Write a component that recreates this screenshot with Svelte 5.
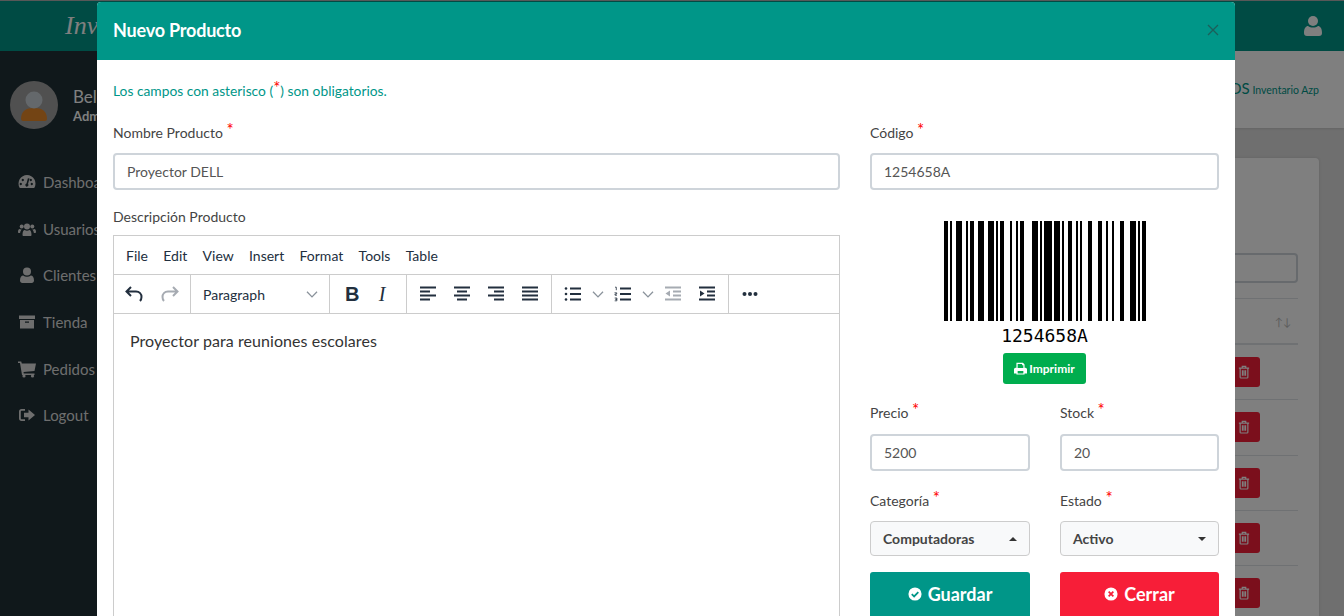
<script>
  const patterns = {
    105: '211232', 12: '112232', 54: '311123', 65: '121124', 101: '311141',
    24: '311222', 33: '111323', 9: '221213', stop: '2331112'
  };
  const codes = [105, 12, 54, 65, 101, 24, 33, 9, 'stop'];
  const bars = [];
  let cursor = 0;
  for (const code of codes) {
    [...patterns[code]].forEach((n, i) => {
      const w = Number(n) * 2;
      if (i % 2 === 0) bars.push({ x: cursor, w });
      cursor += w;
    });
  }

  const nav = [
    { label: 'Dashboard', icon: 'dash' },
    { label: 'Usuarios', icon: 'users' },
    { label: 'Clientes', icon: 'user' },
    { label: 'Tienda', icon: 'box' },
    { label: 'Pedidos', icon: 'cart' },
    { label: 'Logout', icon: 'out' }
  ];
  const rows = [1, 2, 3, 4, 5];
</script>

<div class="page">
  <header class="topbar">
    <span class="brand">Inventario</span>
    <svg class="top-user" viewBox="0 0 18 20"><circle cx="9" cy="5" r="5"/><path d="M0 17c0-5 2-7 4-7 1.500 1 3 1.500 5 1.500s3.500-.5 5-1.500c2 0 4 2 4 7 0 2-1 3-3 3H3c-2 0-3-1-3-3z"/></svg>
  </header>
  <div class="shell">
    <aside class="sidebar">
      <div class="profile">
        <div class="avatar">
          <svg viewBox="0 0 48 48"><path d="M11 38c0-8 5-11 13-11s13 3 13 11c0 1-1 2-2 2H13c-1 0-2-1-2-2z" fill="#ff8000" opacity=".75"/><circle cx="24" cy="19" r="8.500" fill="#c9d0d6"/></svg>
        </div>
        <div class="who"><b>Belen</b><small>Admin</small></div>
      </div>
      <nav class="menu">
        {#each nav as item}
          <div class="menu-item">
            <svg class="menu-icon" viewBox="0 0 18 18">
              {#if item.icon === 'dash'}
                <path fill-rule="evenodd" d="M9 2a8.500 8.500 0 0 0-7.400 12.700c.2.300.5.300.8.300h13.200c.3 0 .6 0 .8-.3A8.500 8.500 0 0 0 9 2zM4 11a1.200 1.200 0 1 1 0-.1zm2-4a1.200 1.200 0 1 1 0-.1zm5.500-1.500L10 11a1.500 1.500 0 1 1-1.500-.4l1.400-5.400zM14 7a1.200 1.200 0 1 1 0-.1zm1 4a1.200 1.200 0 1 1 0-.1z"/>
              {:else if item.icon === 'users'}
                <circle cx="9" cy="6.500" r="3"/><circle cx="3.700" cy="6.500" r="2"/><circle cx="14.300" cy="6.500" r="2"/><path d="M4.500 15c0-3.500 1-5 2.200-5 .6.400 1.400.7 2.300.7s1.700-.3 2.300-.7c1.200 0 2.200 1.500 2.200 5 0 .6-.5 1-1.200 1H5.700c-.7 0-1.200-.4-1.200-1z"/><path d="M0 12c0-2 .7-3 1.700-3 .6.400 1.200.6 2 .6-.8.900-1.500 2-1.600 3.400H1c-.6 0-1-.4-1-1zM18 12c0-2-.7-3-1.700-3-.6.400-1.200.6-2 .6.800.9 1.500 2 1.600 3.400h1c.6 0 1.100-.4 1.100-1z"/>
              {:else if item.icon === 'user'}
                <circle cx="9" cy="5.500" r="4"/><path d="M2 14.500c0-3.500 1.500-5 3.200-5 1 .8 2.300 1.200 3.800 1.200s2.800-.4 3.800-1.200c1.700 0 3.200 1.500 3.200 5 0 1.500-1 2.500-2.300 2.500H4.300C3 17 2 16 2 14.500z"/>
              {:else if item.icon === 'box'}
                <path fill-rule="evenodd" d="M1 2.500h16v3.500H1zM2 7h14v8.500H2zm5 1.500v1.300h4V8.500z"/>
              {:else if item.icon === 'cart'}
                <path d="M0 1.500h3.200l.6 2H18l-1.500 7.500-11 1 .3 1.500h10.700v1.500H4L2 3H0z"/><circle cx="6" cy="16" r="1.600"/><circle cx="14.500" cy="16" r="1.600"/>
              {:else}
                <path d="M7 3H3.500C2 3 1 4 1 5.500v7C1 14 2 15 3.500 15H7v-1.800H3.800c-.6 0-1-.4-1-1V5.800c0-.6.400-1 1-1H7z"/><path d="M10.500 3.500 17 9l-6.500 5.500v-3.200H6V6.700h4.500z"/>
              {/if}
            </svg>
            <span>{item.label}</span>
          </div>
        {/each}
      </nav>
    </aside>
    <main class="content">
      <div class="content-head"><span class="crumb"><span class="big">POS</span> <span>Inventario Azp</span></span></div>
      <div class="card">
        <div class="search"></div>
        <div class="thead"><span class="sort">↑↓</span></div>
        {#each rows as row}
          <div class="row">
            <span class="trash" data-row={row}>
              <svg viewBox="0 0 14 16"><path fill="none" stroke-width="1.400" d="M1 3.500h12M2.500 3.500v10.500c0 .6.400 1 1 1h7c.6 0 1-.4 1-1V3.500M5 3.300V1.500h4v1.800M5.200 6v6.500M7 6v6.500M8.800 6v6.500"/></svg>
            </span>
          </div>
        {/each}
      </div>
    </main>
  </div>
  <div class="backdrop"></div>

  <section class="modal">
    <div class="modal-head">
      <h2>Nuevo Producto</h2>
      <svg class="close" viewBox="0 0 12 12"><path d="M1 1l10 10M11 1L1 11" stroke="#1c5f5a" stroke-width="1.300" fill="none"/></svg>
    </div>
    <div class="modal-body">
      <p class="hint">Los campos con asterisco (<span class="star">*</span>) son obligatorios.</p>
      <div class="columns">
        <div class="col-left">
          <label class="field-label">Nombre Producto <span class="star">*</span></label>
          <div class="input">Proyector DELL</div>
          <label class="field-label desc-label">Descripción Producto</label>
          <div class="editor">
            <div class="menubar">
              <span>File</span><span>Edit</span><span>View</span><span>Insert</span><span>Format</span><span>Tools</span><span>Table</span>
            </div>
            <div class="toolbar">
              <div class="group g-history">
                <svg class="tool" viewBox="0 0 24 24"><path d="M9 5 4.500 9.500 9 14M5 9.500h9c3.500 0 5.500 2.500 5.500 5.500 0 1.800-.5 3-1.500 4" fill="none" stroke="#222f3e" stroke-width="2"/></svg>
                <svg class="tool" viewBox="0 0 24 24"><path d="M15 5l4.500 4.500L15 14M19 9.500h-9C6.500 9.500 4.500 12 4.500 15c0 1.800.5 3 1.500 4" fill="none" stroke="#a6abb2" stroke-width="2"/></svg>
              </div>
              <div class="group g-format">
                <span>Paragraph</span>
                <svg class="chev" viewBox="0 0 10 6"><path d="M.7.700 5 5l4.300-4.300" fill="none" stroke="#8a929b" stroke-width="1.100"/></svg>
              </div>
              <div class="group g-style">
                <span class="tb-b">B</span>
                <span class="tb-i">I</span>
              </div>
              <div class="group g-align">
                <svg class="tool" viewBox="0 0 24 24"><path d="M4 5.500h16M4 9.500h10M4 13.500h16M4 17.500h10" stroke="#222f3e" stroke-width="2"/></svg>
                <svg class="tool" viewBox="0 0 24 24"><path d="M4 5.500h16M7 9.500h10M4 13.500h16M7 17.500h10" stroke="#222f3e" stroke-width="2"/></svg>
                <svg class="tool" viewBox="0 0 24 24"><path d="M4 5.500h16M10 9.500h10M4 13.500h16M10 17.500h10" stroke="#222f3e" stroke-width="2"/></svg>
                <svg class="tool" viewBox="0 0 24 24"><path d="M4 5.500h16M4 9.500h16M4 13.500h16M4 17.500h16" stroke="#222f3e" stroke-width="2"/></svg>
              </div>
              <div class="group g-lists">
                <svg class="tool-s" viewBox="0 0 18 16"><path d="M6 2.500h11M6 8h11M6 13.500h11" stroke="#222f3e" stroke-width="1.800"/><circle cx="2" cy="2.500" r="1.300" fill="#222f3e"/><circle cx="2" cy="8" r="1.300" fill="#222f3e"/><circle cx="2" cy="13.500" r="1.300" fill="#222f3e"/></svg>
                <svg class="chev lc" viewBox="0 0 10 6"><path d="M.7.700 5 5l4.300-4.300" fill="none" stroke="#8a929b" stroke-width="1.100"/></svg>
                <svg class="tool-s" viewBox="0 0 18 16"><path d="M6 2.500h11M6 8h11M6 13.500h11" stroke="#222f3e" stroke-width="1.800"/><path d="M1 1.200h1.300v3M.5 6.800h2.200v1.200H1v1.200h2M.7 12h2.200v1.300H1.500h1.400v1.500H.7" fill="none" stroke="#222f3e" stroke-width=".8"/></svg>
                <svg class="chev lc" viewBox="0 0 10 6"><path d="M.7.700 5 5l4.300-4.300" fill="none" stroke="#8a929b" stroke-width="1.100"/></svg>
                <svg class="tool outdent" viewBox="0 0 24 24"><path d="M4 5.500h16M12 9.500h8M12 13.500h8M4 17.500h16" stroke="#a6abb2" stroke-width="2"/><path d="M9 8.500v6l-4.500-3z" fill="#a6abb2"/></svg>
                <svg class="tool" viewBox="0 0 24 24"><path d="M4 5.500h16M12 9.500h8M12 13.500h8M4 17.500h16" stroke="#222f3e" stroke-width="2"/><path d="M5 8.500v6l4.500-3z" fill="#222f3e"/></svg>
              </div>
              <div class="group g-more">
                <svg class="tool" viewBox="0 0 24 24"><circle cx="6.500" cy="12" r="2" fill="#222f3e"/><circle cx="12" cy="12" r="2" fill="#222f3e"/><circle cx="17.500" cy="12" r="2" fill="#222f3e"/></svg>
              </div>
            </div>
            <div class="edit-area">Proyector para reuniones escolares</div>
          </div>
        </div>

        <div class="col-right">
          <label class="field-label">Código <span class="star">*</span></label>
          <div class="input">1254658A</div>
          <div class="barcode">
            <svg width={cursor} height="100" viewBox="0 0 {cursor} 100" shape-rendering="crispEdges">
              {#each bars as bar}
                <rect x={bar.x} y="0" width={bar.w} height="100" fill="#000" />
              {/each}
            </svg>
            <div class="code-text">1254658A</div>
            <div class="print">
              <svg viewBox="0 0 16 16"><path fill-rule="evenodd" d="M3 1h8l2 2v4h1c1 0 2 1 2 2v5h-3v1.500H3V14H0V9c0-1 1-2 2-2h1V1zm1.500 1.500V7.500h7V4H10V2.500zM4.500 11v3h7v-3z"/></svg>
              Imprimir
            </div>
          </div>
          <div class="pair">
            <div>
              <label class="field-label">Precio <span class="star">*</span></label>
              <div class="input">5200</div>
            </div>
            <div>
              <label class="field-label">Stock <span class="star">*</span></label>
              <div class="input">20</div>
            </div>
          </div>
          <div class="pair pair-select">
            <div>
              <label class="field-label">Categoría <span class="star">*</span></label>
              <div class="select">Computadoras <i class="caret up"></i></div>
            </div>
            <div>
              <label class="field-label">Estado <span class="star">*</span></label>
              <div class="select">Activo <i class="caret"></i></div>
            </div>
          </div>
          <div class="pair pair-actions">
            <div class="action save">
              <svg viewBox="0 0 16 16"><circle cx="8" cy="8" r="7.500" fill="#fff"/><path d="M4.300 8.200 7 10.800l4.800-5" fill="none" stroke="#009688" stroke-width="2"/></svg>
              Guardar
            </div>
            <div class="action cancel">
              <svg viewBox="0 0 16 16"><circle cx="8" cy="8" r="7.500" fill="#fff"/><path d="M5.300 5.300l5.400 5.400M10.700 5.300l-5.400 5.400" fill="none" stroke="#f71e38" stroke-width="2"/></svg>
              Cerrar
            </div>
          </div>
        </div>
      </div>
    </div>
  </section>
</div>

<style>
  :global(body) {
    margin: 0;
    font-family: Lato, "Open Sans", sans-serif;
  }
  .page {
    position: relative;
    width: 1344px;
    height: 616px;
    overflow: hidden;
    background: #dedede;
    font-size: 14px;
    color: #444;
  }
  .topbar {
    height: 50px;
    border-top: 1px solid #b0b0b0;
    background: #009688;
    display: flex;
    align-items: center;
    justify-content: space-between;
    padding: 0 22px 0 65px;
  }
  .brand {
    font-family: "Liberation Serif", serif;
    font-style: italic;
    font-size: 26px;
    color: #fff;
  }
  .top-user {
    width: 18px;
    height: 20px;
    fill: #fff;
  }
  .shell {
    display: flex;
    height: 565px;
  }
  .sidebar {
    width: 230px;
    flex-shrink: 0;
    background: #203036;
    color: #fff;
  }
  .profile {
    display: flex;
    align-items: center;
    gap: 15px;
    padding: 30px 10px 0;
  }
  .avatar {
    width: 48px;
    height: 48px;
    border-radius: 50%;
    background: #a0a0a0;
    overflow: hidden;
  }
  .avatar svg {
    display: block;
    width: 48px;
    height: 48px;
  }
  .who b {
    display: block;
    font-weight: 400;
    font-size: 17px;
  }
  .who small {
    font-size: 13px;
    font-weight: 700;
  }
  .menu {
    margin-top: 30px;
    display: flex;
    flex-direction: column;
  }
  .menu-item {
    height: 46.600px;
    display: flex;
    align-items: center;
    gap: 7px;
    padding-left: 18px;
    font-size: 15px;
    color: #ddd;
  }
  .menu-icon {
    width: 18px;
    height: 18px;
    fill: #ddd;
  }
  .content {
    flex: 1;
    display: flex;
    flex-direction: column;
    min-height: 0;
  }
  .content-head {
    height: 77px;
    flex-shrink: 0;
    box-sizing: border-box;
    padding: 0 25px 4px 0;
    background: #fff;
    display: flex;
    align-items: center;
    justify-content: flex-end;
    box-shadow: 0 1px 2px rgba(0, 0, 0, 0.1);
  }
  .crumb {
    color: #009688;
    font-size: 10.500px;
  }
  .crumb .big {
    font-size: 15px;
  }
  .card {
    margin: 30px 25px 0 auto;
    width: 500px;
    flex: 1;
    min-height: 0;
    overflow: hidden;
    background: #fff;
    border-radius: 4px 4px 0 0;
    padding: 95px 21px 0 0;
    box-sizing: border-box;
    box-shadow: 0 0 3px rgba(0, 0, 0, 0.12);
  }
  .search {
    height: 30px;
    border: 2px solid #ced4da;
    border-radius: 4px;
    box-sizing: border-box;
  }
  .thead {
    margin-top: 15px;
    height: 47px;
    box-sizing: border-box;
    border-top: 1px solid #dee2e6;
    border-bottom: 2px solid #dee2e6;
    display: flex;
    align-items: center;
    justify-content: flex-end;
    padding-right: 7px;
  }
  .sort {
    color: #bbb;
    font-size: 11px;
  }
  .row {
    height: 55.300px;
    box-sizing: border-box;
    border-bottom: 1px solid #dee2e6;
    display: flex;
    align-items: center;
    justify-content: flex-end;
    padding-right: 38px;
  }
  .trash {
    width: 50px;
    height: 30px;
    border-radius: 3px;
    background: #f71e38;
    display: flex;
    align-items: center;
    justify-content: flex-end;
    padding-right: 10px;
    box-sizing: border-box;
  }
  .trash svg {
    width: 12px;
    height: 14px;
  }
  .trash svg path {
    stroke: #fff;
  }
  .backdrop {
    position: absolute;
    inset: 0;
    background: rgba(0, 0, 0, 0.5);
  }
  .modal {
    position: absolute;
    left: 97px;
    top: 2px;
    width: 1138px;
    background: #fff;
    border-radius: 4px 4px 0 0;
    height: 700px;
  }
  .modal-head {
    height: 58px;
    box-sizing: border-box;
    padding: 0 16px 2px;
    background: #009688;
    border-radius: 4px 4px 0 0;
    display: flex;
    align-items: center;
    justify-content: space-between;
  }
  .modal-head h2 {
    margin: 0;
    font-size: 18px;
    font-weight: 700;
    color: #fff;
    letter-spacing: -0.2px;
  }
  .close {
    width: 12px;
    height: 12px;
  }
  .modal-body {
    padding: 21px 16px 0;
  }
  .hint {
    margin: 0 0 22px;
    font-size: 13.800px;
    line-height: 20px;
    color: #009688;
  }
  .star {
    color: #f00;
    font-size: 17px;
    line-height: 10px;
    position: relative;
    top: -2px;
  }
  .columns {
    display: flex;
    gap: 30px;
  }
  .col-left {
    width: 727px;
  }
  .col-right {
    width: 349px;
  }
  .field-label {
    display: block;
    font-size: 14px;
    line-height: 20px;
    color: #444;
    margin-bottom: 10px;
  }
  .desc-label {
    margin-top: 17px;
    margin-bottom: 8px;
  }
  .input {
    height: 37px;
    box-sizing: border-box;
    border: 2px solid #ced4da;
    border-radius: 4px;
    padding: 0 12px;
    display: flex;
    align-items: center;
    font-size: 14px;
    color: #555;
  }
  .editor {
    border: 1px solid #ccc;
    height: 500px;
    box-sizing: border-box;
  }
  .menubar {
    height: 38px;
    display: flex;
    align-items: center;
    gap: 15.300px;
    padding-left: 12px;
    font-size: 14px;
    color: #222f3e;
  }
  .toolbar {
    height: 40px;
    box-sizing: border-box;
    border-top: 1px solid #ccc;
    border-bottom: 1px solid #ccc;
    display: flex;
    align-items: center;
  }
  .group {
    height: 100%;
    display: flex;
    align-items: center;
    box-sizing: border-box;
    border-right: 1px solid #ccc;
  }
  .group:last-child {
    border-right: none;
  }
  .tool {
    width: 24px;
    height: 24px;
    flex-shrink: 0;
  }
  .tool-s {
    width: 18px;
    height: 16px;
    flex-shrink: 0;
  }
  .g-history {
    width: 77px;
    gap: 12px;
    padding-left: 8px;
  }
  .g-format {
    width: 139px;
    justify-content: space-between;
    padding: 0 11px 0 12px;
    font-size: 14px;
    color: #222f3e;
  }
  .chev {
    width: 12px;
    height: 7px;
    flex-shrink: 0;
  }
  .g-style {
    width: 77px;
    gap: 16px;
    padding-left: 15px;
  }
  .tb-b {
    font: 700 20px "Liberation Sans", sans-serif;
    color: #222f3e;
    width: 14px;
  }
  .tb-i {
    font: italic 400 20px "Liberation Serif", serif;
    color: #222f3e;
    width: 14px;
    text-align: center;
  }
  .g-align {
    width: 145px;
    gap: 10px;
    padding-left: 9px;
  }
  .g-lists {
    width: 177px;
    padding-left: 12px;
  }
  .lc {
    margin: 0 10px;
  }
  .outdent {
    margin: 0 10px 0 -3px;
  }
  .g-more {
    padding-left: 9px;
  }
  .edit-area {
    padding: 17px 16px;
    font-size: 16px;
    line-height: 20px;
    letter-spacing: 0.07px;
    color: #333;
  }
  .barcode {
    display: flex;
    flex-direction: column;
    align-items: center;
    margin-top: 31px;
  }
  .barcode svg {
    display: block;
  }
  .code-text {
    font: 18px "DejaVu Sans Mono", "Liberation Mono", monospace;
    line-height: 20px;
    color: #000;
    margin-top: 5px;
    margin-bottom: 1px;
  }
  .print {
    margin-top: 6px;
    width: 83px;
    height: 31px;
    border-radius: 3px;
    background: #00ad4e;
    color: #fff;
    font-size: 12px;
    font-weight: 700;
    display: flex;
    align-items: center;
    justify-content: center;
    gap: 2px;
  }
  .print svg {
    width: 13px;
    height: 13px;
    fill: #fff;
  }
  .pair {
    display: grid;
    grid-template-columns: 160px 159px;
    gap: 30px;
    margin-top: 19px;
  }
  .pair .field-label {
    margin-bottom: 11px;
  }
  .pair-select {
    margin-top: 20px;
  }
  .select {
    height: 35px;
    box-sizing: border-box;
    border: 1px solid #ccc;
    border-radius: 4px;
    background: #f8f9fa;
    padding: 0 12px;
    display: flex;
    align-items: center;
    justify-content: space-between;
    font-size: 14px;
    font-weight: 700;
    color: #444;
    margin-top: -1px;
  }
  .caret {
    width: 0;
    height: 0;
    border-left: 4px solid transparent;
    border-right: 4px solid transparent;
    border-top: 4px solid #333;
  }
  .caret.up {
    border-top: none;
    border-bottom: 4px solid #333;
  }
  .pair-actions {
    margin-top: 16px;
  }
  .action {
    height: 46px;
    box-sizing: border-box;
    padding-bottom: 2px;
    border-radius: 3px;
    color: #fff;
    font-size: 18px;
    font-weight: 700;
    display: flex;
    align-items: center;
    justify-content: center;
    gap: 6px;
  }
  .action svg {
    width: 14px;
    height: 14px;
  }
  .save {
    background: #009688;
  }
  .cancel {
    background: #f71e38;
  }
</style>
